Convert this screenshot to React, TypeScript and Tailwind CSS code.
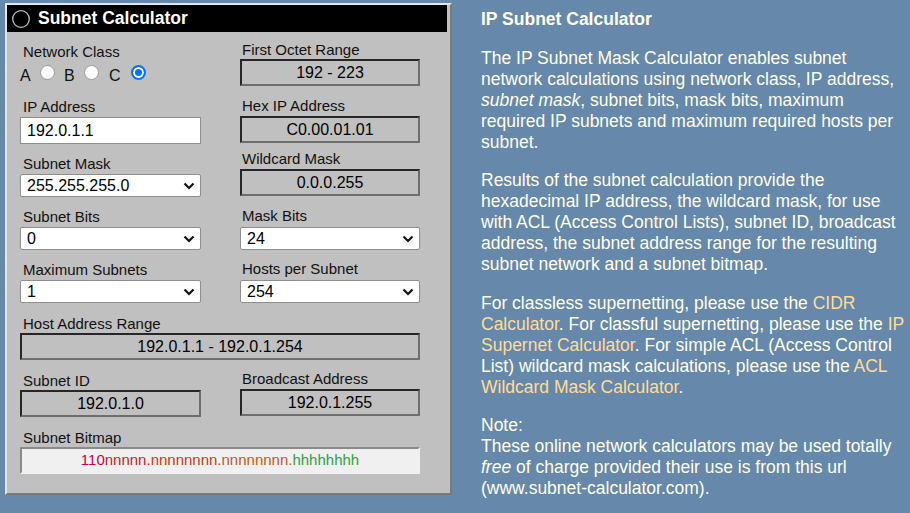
import React from 'react';

const font = { fontFamily: '"Liberation Sans", Arial, sans-serif' };

function Chevron() {
  return (
    <svg
      className="pointer-events-none absolute right-[6px] top-1/2 -translate-y-1/2"
      width="12"
      height="8"
      viewBox="0 0 12 8"
    >
      <path d="M1.5 1.5 L6 6 L10.5 1.5" fill="none" stroke="#111" strokeWidth="2.2" />
    </svg>
  );
}

function Select({ value }: { value: string }) {
  return (
    <div className="relative h-[23px] w-full">
      <select
        defaultValue={value}
        className="h-full w-full appearance-none rounded-[2px] border border-[#8f8f8f] bg-white pl-[6px] text-[16px] leading-[21px] text-black outline-none"
      >
        <option>{value}</option>
      </select>
      <Chevron />
    </div>
  );
}

function Box({ value, className = '' }: { value: string; className?: string }) {
  return (
    <div
      className={`flex h-[27px] w-full items-center justify-center border-2 border-t-[#262626] border-l-[#262626] border-r-[#6e6e6e] border-b-[#6e6e6e] bg-[#c0c0c0] text-[16px] text-black ${className}`}
    >
      {value}
    </div>
  );
}

function Label({ text, className = '' }: { text: string; className?: string }) {
  return <div className={`h-[18px] text-[15px] leading-[18px] text-[#111] ${className}`}>{text}</div>;
}

function Radio({ checked = false, className = '' }: { checked?: boolean; className?: string }) {
  return (
    <input
      type="radio"
      name="cls"
      defaultChecked={checked}
      className={`mt-[4px] h-[15px] w-[15px] shrink-0 appearance-none rounded-full border border-[#9a9a9a] bg-white checked:border-2 checked:border-[#0a72f0] checked:bg-[#0a72f0] checked:shadow-[inset_0_0_0_2px_#ffffff] ${className}`}
    />
  );
}

export default function App() {
  return (
    <div className="flex min-h-[513px] w-[910px] bg-[#6688aa]" style={font}>
      {/* calculator panel */}
      <div className="ml-[5px] mt-[3px] h-[492px] w-[447px] shrink-0 border-2 border-t-[#e6e6e6] border-l-[#e6e6e6] border-r-[#7a7a7a] border-b-[#7a7a7a] bg-[#c0c0c0]">
        <div className="mr-[3px] flex h-[27px] items-center gap-[7px] bg-black pl-[4px]">
          <svg width="20" height="20" viewBox="0 0 20 20">
            <circle cx="10" cy="10" r="8.3" fill="#000" stroke="#bdbdbd" strokeWidth="1.3" />
          </svg>
          <span className="text-[17.5px] font-bold leading-none text-white">Subnet Calculator</span>
        </div>

        <div className="pl-[13px] pt-[9px]">
          {/* row: class / first octet */}
          <div className="grid h-[56px] grid-cols-[181px_180px] gap-x-[39px]">
            <div className="pt-[2px]">
              <Label text="Network Class" className="pl-[3px]" />
              <div className="flex items-start text-[16px] leading-[18px] text-[#111]">
                <span className="mt-[6px] w-[10px]">A</span>
                <Radio className="ml-[10px] mr-[9px]" />
                <span className="mt-[6px] w-[11px]">B</span>
                <Radio className="ml-[9px] mr-[10px]" />
                <span className="mt-[6px] w-[11px]">C</span>
                <Radio checked className="ml-[11px]" />
              </div>
            </div>
            <div>
              <Label text="First Octet Range" className="pl-[2px]" />
              <Box value="192 - 223" />
            </div>
          </div>

          {/* row: ip / hex */}
          <div className="grid h-[53px] grid-cols-[181px_180px] gap-x-[39px]">
            <div className="pt-[1px]">
              <Label text="IP Address" className="pl-[3px]" />
              <input
                defaultValue="192.0.1.1"
                className="mt-[1px] h-[27px] w-full border border-[#8f8f8f] bg-white pl-[6px] text-[16px] text-black outline-none"
              />
            </div>
            <div>
              <Label text="Hex IP Address" className="pl-[2px]" />
              <Box value="C0.00.01.01" className="mt-[1px]" />
            </div>
          </div>

          {/* row: mask / wildcard */}
          <div className="grid h-[57px] grid-cols-[181px_180px] gap-x-[39px]">
            <div className="pt-[5px]">
              <Label text="Subnet Mask" className="pl-[3px]" />
              <div className="mt-[1px]">
                <Select value="255.255.255.0" />
              </div>
            </div>
            <div>
              <Label text="Wildcard Mask" className="pl-[2px]" />
              <Box value="0.0.0.255" className="mt-[1px]" />
            </div>
          </div>

          {/* row: subnet bits / mask bits */}
          <div className="grid h-[53px] grid-cols-[181px_180px] gap-x-[39px]">
            <div className="pt-[1px]">
              <Label text="Subnet Bits" className="pl-[3px]" />
              <div className="mt-[1px]">
                <Select value="0" />
              </div>
            </div>
            <div>
              <Label text="Mask Bits" className="pl-[2px]" />
              <div className="mt-[2px]">
                <Select value="24" />
              </div>
            </div>
          </div>

          {/* row: max subnets / hosts */}
          <div className="grid h-[55px] grid-cols-[181px_180px] gap-x-[39px]">
            <div className="pt-[1px]">
              <Label text="Maximum Subnets" className="pl-[3px]" />
              <div className="mt-[1px]">
                <Select value="1" />
              </div>
            </div>
            <div>
              <Label text="Hosts per Subnet" className="pl-[2px]" />
              <div className="mt-[2px]">
                <Select value="254" />
              </div>
            </div>
          </div>

          {/* host range */}
          <div className="h-[55px] w-[400px]">
            <Label text="Host Address Range" className="pl-[3px]" />
            <Box value="192.0.1.1 - 192.0.1.254" />
          </div>

          {/* subnet id / broadcast */}
          <div className="grid h-[59px] grid-cols-[181px_180px] gap-x-[39px]">
            <div className="pt-[2px]">
              <Label text="Subnet ID" className="pl-[3px]" />
              <Box value="192.0.1.0" />
            </div>
            <div>
              <Label text="Broadcast Address" className="pl-[2px]" />
              <Box value="192.0.1.255" className="mt-[1px]" />
            </div>
          </div>

          {/* bitmap */}
          <div className="w-[400px]">
            <Label text="Subnet Bitmap" className="pl-[3px]" />
            <div className="flex h-[27px] items-center justify-center border-2 border-t-[#8a8a8a] border-l-[#8a8a8a] border-r-[#f0f0f0] border-b-[#f0f0f0] bg-[#f0f0f0] text-[15px]">
              <span className="text-[#cc0044]">110</span>
              <span className="text-[#c42418]">nnnnn.</span>
              <span className="text-[#c83a14]">nnnnnnnn.</span>
              <span className="text-[#c65a18]">nnnnnnnn.</span>
              <span className="text-[#33a040]">hhhhhhhh</span>
            </div>
          </div>
        </div>
      </div>

      {/* description */}
      <div className="whitespace-nowrap pl-[29px] pt-[9px] text-[17.5px] leading-[21px] text-[#fffff0]">
        <h1 className="font-bold">IP Subnet Calculator</h1>
        <p className="mt-[18px]">
          The IP Subnet Mask Calculator enables subnet
          <br />
          network calculations using network class, IP address,
          <br />
          <em>subnet mask</em>, subnet bits, mask bits, maximum
          <br />
          required IP subnets and maximum required hosts per
          <br />
          subnet.
        </p>
        <p className="mt-[17px]">
          Results of the subnet calculation provide the
          <br />
          hexadecimal IP address, the wildcard mask, for use
          <br />
          with ACL (Access Control Lists), subnet ID, broadcast
          <br />
          address, the subnet address range for the resulting
          <br />
          subnet network and a subnet bitmap.
        </p>
        <p className="mt-[18px]">
          For classless supernetting, please use the <a className="text-[#ffdd99]">CIDR</a>
          <br />
          <a className="text-[#ffdd99]">Calculator</a>. For classful supernetting, please use the{' '}
          <a className="text-[#ffdd99]">IP</a>
          <br />
          <a className="text-[#ffdd99]">Supernet Calculator</a>. For simple ACL (Access Control
          <br />
          List) wildcard mask calculations, please use the <a className="text-[#ffdd99]">ACL</a>
          <br />
          <a className="text-[#ffdd99]">Wildcard Mask Calculator</a>.
        </p>
        <p className="mt-[17px]">
          Note:
          <br />
          These online network calculators may be used totally
          <br />
          <em>free</em> of charge provided their use is from this url
          <br />
          (www.subnet-calculator.com).
        </p>
      </div>
    </div>
  );
}
